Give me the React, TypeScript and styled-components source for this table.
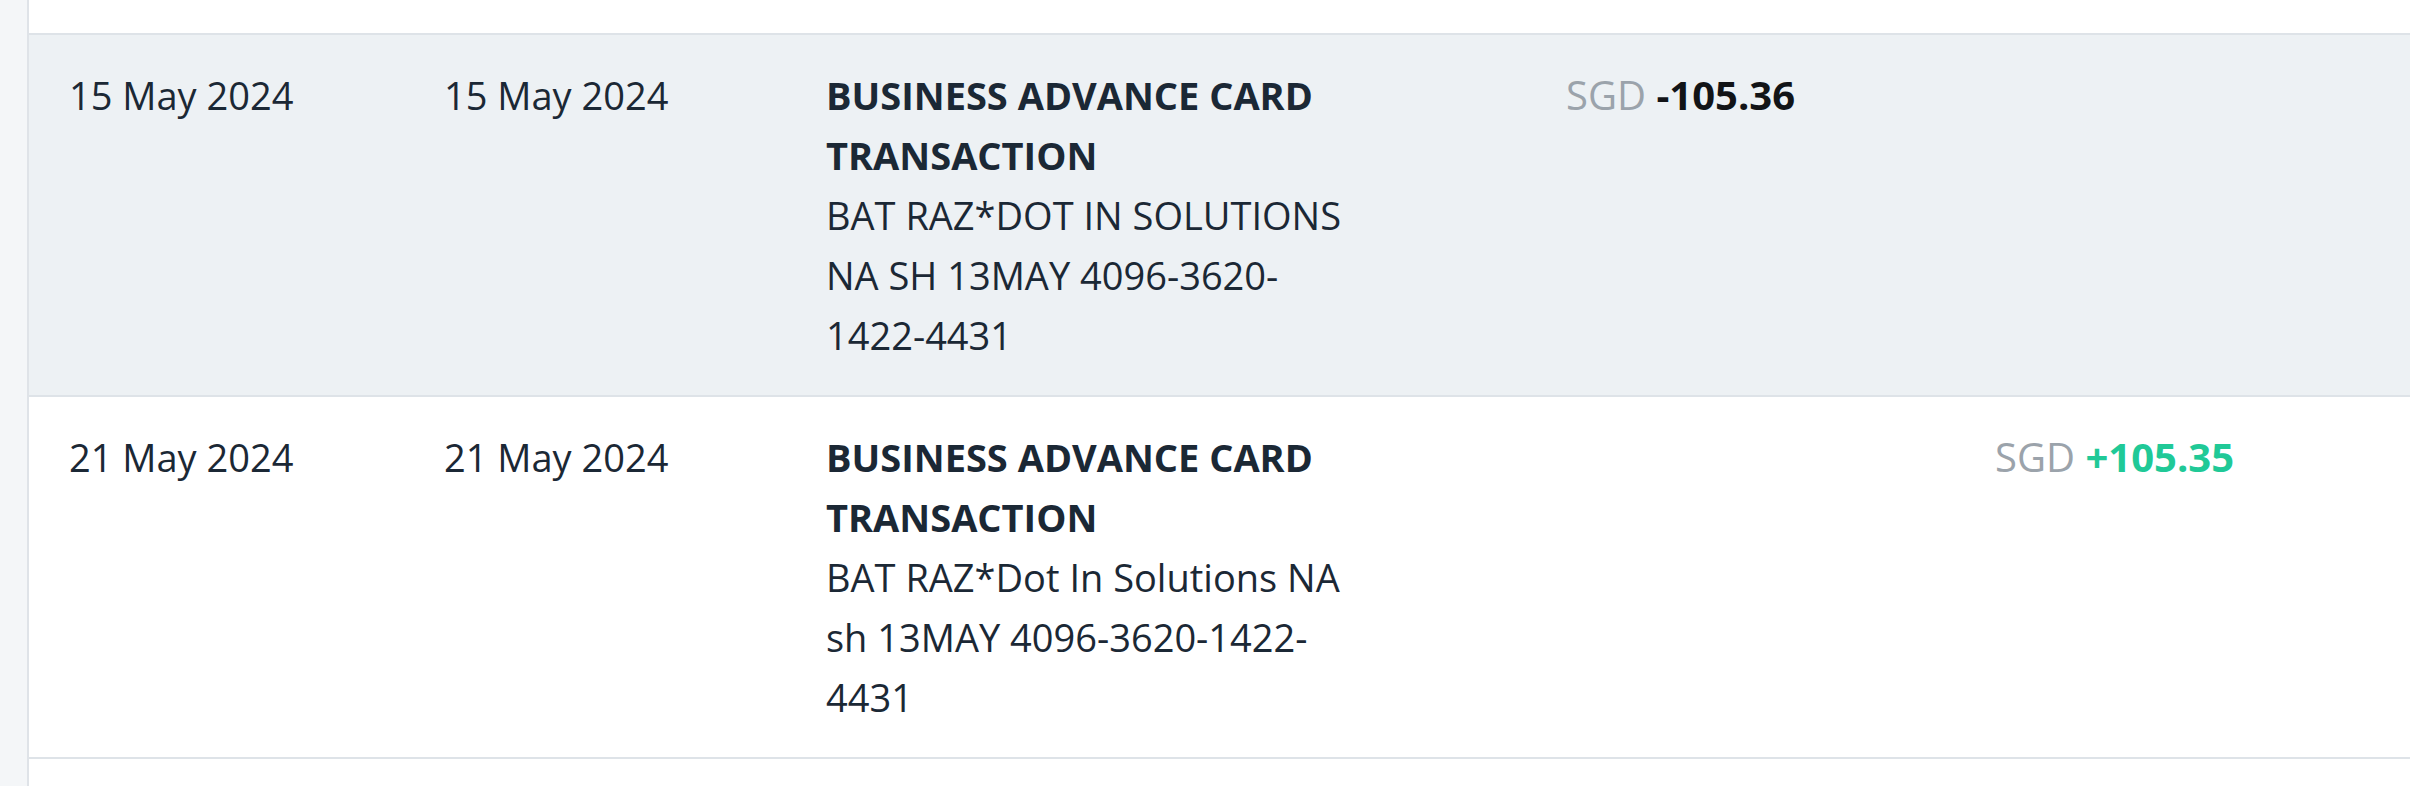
import React from "react";
import styled, { createGlobalStyle } from "styled-components";

const GlobalStyle = createGlobalStyle`
  html, body {
    margin: 0;
    padding: 0;
    background: #ffffff;
  }
  body {
    font-family: "Open Sans", "Liberation Sans", sans-serif;
    color: #1b2835;
    overflow: hidden;
  }
`;

const Page = styled.div`
  display: flex;
  width: 2410px;
  height: 786px;
  overflow: hidden;
`;

const SideStrip = styled.div`
  width: 27px;
  flex: 0 0 27px;
  background: #f4f6f8;
  border-right: 2px solid #dfe3e8;
`;

const Table = styled.div`
  flex: 1;
  display: flex;
  flex-direction: column;
`;

const PrevRow = styled.div`
  height: 33px;
  background: #ffffff;
`;

const Row = styled.div<{ $shaded?: boolean }>`
  display: grid;
  grid-template-columns: 375px 382px 740px 429px 1fr;
  border-top: 2px solid #dee3e8;
  background: ${(p) => (p.$shaded ? "#edf1f4" : "#ffffff")};
  padding: 30px 0;
  font-size: 38px;
  line-height: 60px;
`;

const EndRow = styled.div`
  flex: 1;
  border-top: 2px solid #dee3e8;
`;

const Cell = styled.div`
  padding-left: 40px;
  min-width: 0;
`;

const AmountCell = styled(Cell)`
  font-size: 40px;
  white-space: nowrap;
`;

const DateText = styled.span`
  color: #1b2835;
  font-weight: 400;
  white-space: nowrap;
`;

const Description = styled.div`
  max-width: 538px;
  color: #1b2835;
`;

const Title = styled.div`
  font-weight: 700;
`;

const Detail = styled.div`
  font-weight: 400;
`;

const Currency = styled.span`
  color: #9ba3ab;
  font-weight: 400;
`;

const Amount = styled.span<{ $credit?: boolean }>`
  color: ${(p) => (p.$credit ? "#20c997" : "#121417")};
  font-weight: 700;
`;

type Tx = {
  date: string;
  valueDate: string;
  title: string;
  detail: string;
  debit?: string;
  credit?: string;
};

const rows: Tx[] = [
  {
    date: "15 May 2024",
    valueDate: "15 May 2024",
    title: "BUSINESS ADVANCE CARD TRANSACTION",
    detail: "BAT RAZ*DOT IN SOLUTIONS NA SH 13MAY 4096-3620-1422-4431",
    debit: "-105.36",
  },
  {
    date: "21 May 2024",
    valueDate: "21 May 2024",
    title: "BUSINESS ADVANCE CARD TRANSACTION",
    detail: "BAT RAZ*Dot In Solutions NA sh 13MAY 4096-3620-1422-4431",
    credit: "+105.35",
  },
];

export default function App() {
  return (
    <>
      <GlobalStyle />
      <Page>
        <SideStrip />
        <Table>
          <PrevRow />
          {rows.map((r, i) => (
            <Row key={i} $shaded={i === 0}>
              <Cell>
                <DateText>{r.date}</DateText>
              </Cell>
              <Cell>
                <DateText>{r.valueDate}</DateText>
              </Cell>
              <Cell>
                <Description>
                  <Title>{r.title}</Title>
                  <Detail>{r.detail}</Detail>
                </Description>
              </Cell>
              <AmountCell>
                {r.debit && (
                  <>
                    <Currency>SGD</Currency> <Amount>{r.debit}</Amount>
                  </>
                )}
              </AmountCell>
              <AmountCell>
                {r.credit && (
                  <>
                    <Currency>SGD</Currency> <Amount $credit>{r.credit}</Amount>
                  </>
                )}
              </AmountCell>
            </Row>
          ))}
          <EndRow />
        </Table>
      </Page>
    </>
  );
}
